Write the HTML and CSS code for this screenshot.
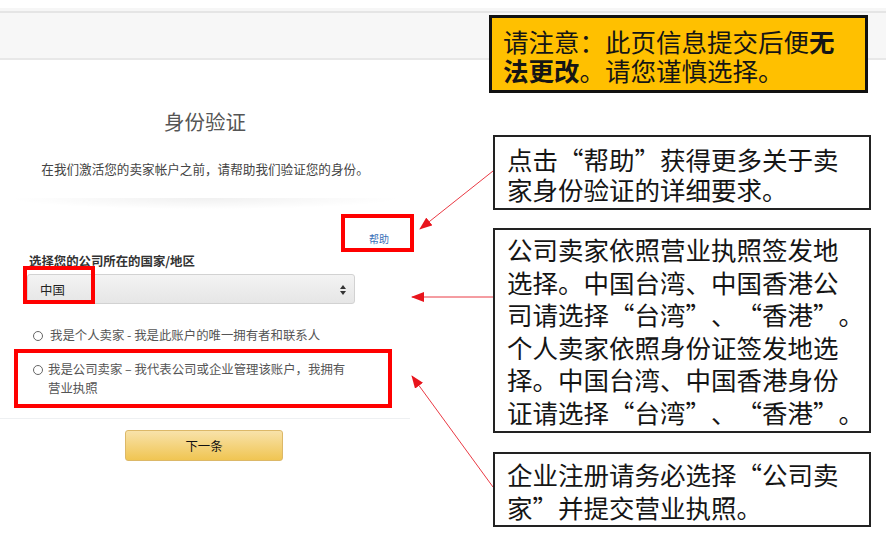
FILE: index.html
```html
<!DOCTYPE html>
<html lang="zh-CN">
<head>
  <meta charset="UTF-8">
  <meta name="viewport" content="width=device-width, initial-scale=1.0">
  <title>身份验证</title>
  <link rel="stylesheet" href="styles.css">
</head>
<body>
  <div class="topbar"></div>

  <div class="panel">
    <div class="title">身份验证</div>
    <div class="subtitle">在我们激活您的卖家帐户之前，请帮助我们验证您的身份。</div>
    <div class="divider"></div>

    <div class="help-row"><a class="help" href="#">帮助</a></div>

    <div class="field-label">选择您的公司所在的国家/地区</div>
    <div class="select">
      <span>中国</span>
      <svg class="select-arrows" width="6" height="10" viewBox="0 0 6 10">
        <path d="M3 0 L6 4 L0 4 Z" fill="#333"/>
        <path d="M0 6 L6 6 L3 10 Z" fill="#333"/>
      </svg>
    </div>

    <label class="radio">
      <span class="dot"></span>
      <span>我是个人卖家 - 我是此账户的唯一拥有者和联系人</span>
    </label>
    <label class="radio radio-two">
      <span class="dot"></span>
      <span>我是公司卖家 – 我代表公司或企业管理该账户，我拥有<br>营业执照</span>
    </label>

    <div class="rule"></div>
    <button class="next">下一条</button>
  </div>

  <!-- annotation layer -->
  <div class="marks">
    <div class="mark mark-help"></div>
    <div class="mark mark-country"></div>
    <div class="mark mark-radio"></div>
  </div>

  <svg class="arrows" width="886" height="539" viewBox="0 0 886 539">
    <defs>
      <marker id="head" markerUnits="userSpaceOnUse" markerWidth="13" markerHeight="10" refX="12" refY="5" orient="auto">
        <path d="M0 0 L13 5 L0 10 Z" fill="#e8141c"/>
      </marker>
    </defs>
    <line x1="493" y1="171" x2="420" y2="229" marker-end="url(#head)"/>
    <line x1="493" y1="297" x2="412" y2="297" marker-end="url(#head)"/>
    <line x1="493" y1="487" x2="412" y2="376" marker-end="url(#head)"/>
  </svg>

  <div class="notes">
    <div class="note note-warn">
      <div class="ln">请注意：此页信息提交后便<b>无</b></div>
      <div class="ln"><b>法更改</b>。请您谨慎选择。</div>
    </div>
    <div class="note note-help">
      <div class="ln">点击“帮助”获得更多关于卖</div>
      <div class="ln">家身份验证的详细要求。</div>
    </div>
    <div class="note note-country">
      <div class="ln">公司卖家依照营业执照签发地</div>
      <div class="ln">选择。中国台湾、中国香港公</div>
      <div class="ln">司请选择“台湾”、“香港”。</div>
      <div class="ln">个人卖家依照身份证签发地选</div>
      <div class="ln">择。中国台湾、中国香港身份</div>
      <div class="ln">证请选择“台湾”、“香港”。</div>
    </div>
    <div class="note note-company">
      <div class="ln">企业注册请务必选择“公司卖</div>
      <div class="ln">家”并提交营业执照。</div>
    </div>
  </div>
</body>
</html>
```

FILE: styles.css
```css
body {
  margin: 0;
  font-family: "Noto Sans CJK SC", "Liberation Sans", sans-serif;
  background: #fff;
  position: relative;
  width: 886px;
  height: 539px;
  overflow: hidden;
}
.topbar {
  margin-top: 11px;
  height: 45px;
  background-color: #f7f7f7;
  border-top: 2px solid #e5e5e5;
  border-bottom: 2px solid #e8e8e8;
  box-shadow: 0 -3px 0 #f6f6f6;
}
.panel {
  width: 410px;
  box-sizing: border-box;
  padding: 0 0 0 27px;
  font-size: 12.4px;
  color: #444;
}
.title {
  margin: 47px 0 0 -27px;
  font-size: 20.5px;
  line-height: 28px;
  text-align: center;
  color: #555;
}
.subtitle {
  margin: 25px 0 0 -27px;
  line-height: 18px;
  text-align: center;
  color: #444;
  font-size: 12.6px;
}
.divider {
  margin: 20px 0 0 -27px;
  height: 14px;
  background: radial-gradient(ellipse 60% 100% at 50% 0, rgba(0, 0, 0, 0.06), rgba(0, 0, 0, 0) 80%);
}
.help-row {
  margin-top: 19px;
  line-height: 14px;
  text-align: right;
  padding-right: 21px;
}
.help {
  font-size: 10px;
  color: #3a70b8;
  text-decoration: none;
}
.field-label {
  margin: 7px 0 0 2px;
  line-height: 16px;
  font-weight: bold;
  color: #333;
}
.select {
  margin-top: 5px;
  width: 328px;
  height: 30px;
  box-sizing: border-box;
  border: 1px solid #d2d2d2;
  border-radius: 3px;
  background: linear-gradient(#f3f3f3, #e6e6e6);
  display: flex;
  align-items: center;
  justify-content: space-between;
  padding: 2px 8px 0 12px;
  color: #222;
}
.radio {
  display: flex;
  align-items: flex-start;
  gap: 7px;
  margin: 22px 0 0 6px;
  line-height: 19px;
  color: #555;
}
.radio-two {
  margin-top: 15px;
}
.radio-two span:last-child {
  margin-left: -2px;
}
.dot {
  flex: none;
  width: 8px;
  height: 8px;
  margin-top: 5px;
  border: 1px solid #666;
  border-radius: 50%;
}
.rule {
  margin: 20px 0 0 -27px;
  height: 1px;
  background: #eef0f2;
}
.next {
  display: block;
  margin: 11px 0 0 98px;
  width: 158px;
  height: 31px;
  border: 1px solid #dcb868;
  border-radius: 3px;
  background: linear-gradient(#f8e2aa, #f0c552);
  font-family: inherit;
  font-size: 12.4px;
  color: #111;
  padding: 0;
}

.marks {
  position: absolute;
  left: 0;
  top: 0;
}
.mark {
  position: absolute;
  border: 4px solid #f00;
  box-sizing: border-box;
}
.mark-help {
  left: 341px;
  top: 214px;
  width: 73px;
  height: 38px;
}
.mark-country {
  left: 23px;
  top: 266px;
  width: 72px;
  height: 38px;
}
.mark-radio {
  left: 14px;
  top: 349px;
  width: 378px;
  height: 59px;
}

.arrows {
  position: absolute;
  left: 0;
  top: 0;
  pointer-events: none;
}
.arrows line {
  stroke: #ea3a44;
  stroke-width: 1;
}

.notes {
  position: absolute;
  left: 489px;
  top: 15px;
  width: 382px;
  font-size: 25.5px;
  color: #151515;
  text-spacing-trim: space-all;
}
.note {
  box-sizing: border-box;
  width: 378px;
  margin-left: 4px;
  background: #fff;
  border: 2px solid #222;
  padding-left: 12px;
  white-space: nowrap;
}
.ln {
  height: 1lh;
}
.note-warn {
  margin-left: 0;
  width: 379px;
  height: 78px;
  background: #ffc000;
  border: 3px solid #111;
  padding: 8px 0 0 11px;
  line-height: 29px;
}
.note-help {
  margin-top: 42px;
  height: 75px;
  padding-top: 7px;
  line-height: 30px;
}
.note-country {
  margin-top: 18px;
  height: 205px;
  padding-top: 3px;
  line-height: 32.5px;
}
.note-company {
  margin-top: 19px;
  height: 75px;
  padding-top: 3px;
  line-height: 33px;
}
```
